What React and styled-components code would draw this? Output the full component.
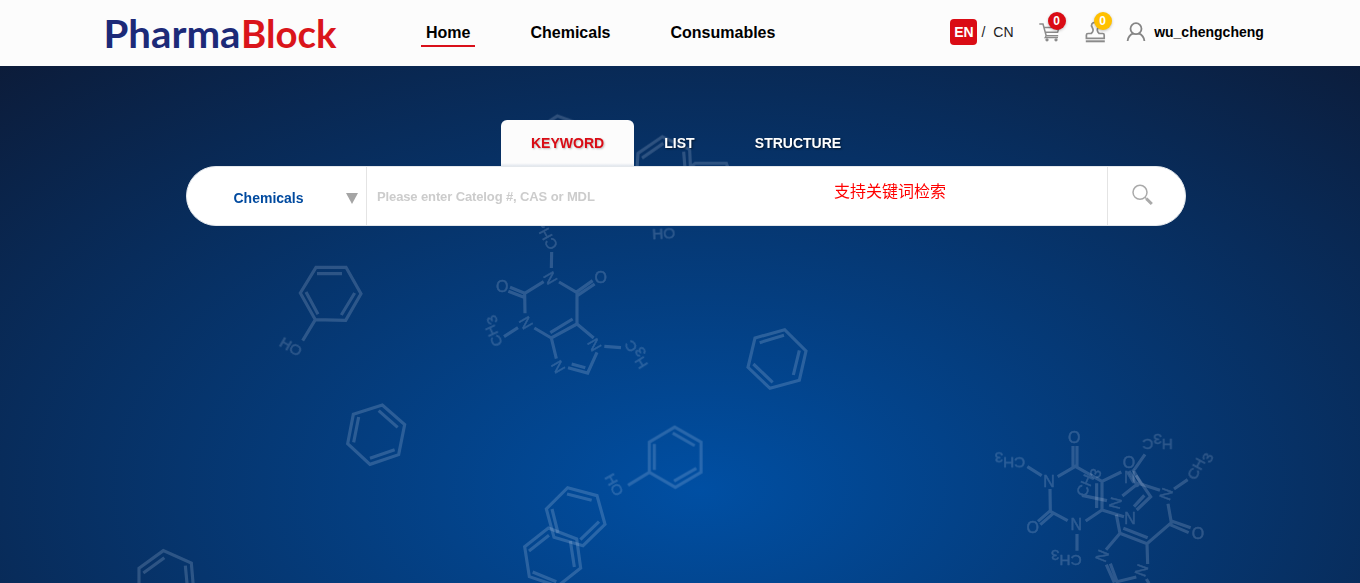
import React from 'react';
import styled, { createGlobalStyle } from 'styled-components';

const GlobalStyle = createGlobalStyle`
  * { box-sizing: border-box; }
  body { margin: 0; overflow: hidden; font-family: "Liberation Sans", "Noto Sans CJK SC", sans-serif; }
`;

const Page = styled.div`
  display: flex;
  flex-direction: column;
  height: 583px;
  width: 1360px;
`;

const Header = styled.header`
  display: flex;
  flex: none;
  height: 66px;
  padding-left: 106px;
  background: #fcfcfc;
`;

const Logo = styled.svg`
  flex: none;
  display: block;
  width: 231px;
  height: 66px;
  overflow: visible;
`;

const Nav = styled.nav`
  display: flex;
  gap: 50px;
  margin-left: 84px;
  padding-top: 19px;
`;

const NavLink = styled.a`
  height: 28px;
  padding: 0 5px;
  font-size: 16px;
  font-weight: 700;
  line-height: 27px;
  color: #000;
  border-bottom: 2px solid ${(p) => (p.$active ? '#d9101a' : 'transparent')};
`;

const Tools = styled.div`
  display: flex;
  align-items: flex-start;
  margin-left: 170px;
  padding-top: 19px;
`;

const Lang = styled.span`
  width: 27px;
  height: 26px;
  border-radius: 4px;
  background: #da0c15;
  color: #fff;
  font-size: 14px;
  font-weight: 700;
  line-height: 27px;
  text-align: center;
`;

const LangText = styled.span`
  margin-left: ${(p) => p.$gap}px;
  color: #222;
  font-size: 14px;
  line-height: 26px;
`;

const IconButton = styled.span`
  position: relative;
  width: 22px;
  height: 26px;
  margin-left: ${(p) => p.$gap}px;
  svg { display: block; width: 22px; height: 26px; }
`;

const Badge = styled.span`
  position: absolute;
  left: 9px;
  top: -7px;
  width: 18px;
  height: 18px;
  border-radius: 50%;
  background: ${(p) => p.$color};
  box-shadow: 0 1px 3px rgba(0, 0, 0, 0.25);
  color: #fff;
  font-size: 12px;
  font-weight: 700;
  line-height: 18px;
  text-align: center;
`;

const User = styled.span`
  margin-left: 6.6px;
  font-size: 14px;
  font-weight: 700;
  line-height: 26px;
  color: #000;
`;

const Hero = styled.main`
  position: relative;
  flex: 1;
  padding: 54px 174px 0 186px;
  background: radial-gradient(1040px 592px at 700px 424px, #004fa3 0%, #0c1b38 100%);
`;

const Molecules = styled.svg`
  position: absolute;
  left: 0;
  top: 0;
  width: 1360px;
  height: 517px;
`;

const Search = styled.div`
  position: relative;
`;

const Tabs = styled.div`
  display: flex;
  height: 46px;
  padding-left: 315px;
`;

const Tab = styled.span`
  padding: 0 30.2px 0 30px;
  border-radius: 6px 6px 0 0;
  font-size: 14px;
  font-weight: 700;
  line-height: 46px;
  color: ${(p) => (p.$active ? '#da0c15' : '#fff')};
  background: ${(p) => (p.$active ? 'linear-gradient(#fcfcfc 43px, #e2e7ee 46px)' : 'none')};
  text-shadow: ${(p) => (p.$active ? '1px 1px 2px rgba(0, 0, 0, .25)' : '1px 1px 2px rgba(0, 0, 0, .6)')};
`;

const Bar = styled.div`
  display: flex;
  height: 60px;
  border: 1px solid #e4e8ec;
  border-radius: 30px;
  background: #fff;
`;

const Category = styled.div`
  display: flex;
  align-items: center;
  width: 180px;
  padding: 4px 8px 0 46.5px;
  border-right: 1px solid #e4e4e4;
  color: #004a9f;
  font-size: 14px;
  font-weight: 700;
  justify-content: space-between;
`;

const Field = styled.div`
  display: flex;
  flex: 1;
  padding-left: 10px;
`;

const Placeholder = styled.span`
  width: 457px;
  color: #ccc;
  font-size: 13px;
  font-weight: 700;
  letter-spacing: -0.12px;
  line-height: 59px;
`;

const Hint = styled.span`
  color: #f00;
  font-family: "Noto Sans CJK SC", sans-serif;
  font-size: 16px;
  line-height: 47px;
`;

const Submit = styled.div`
  display: flex;
  width: 78px;
  padding: 16px 0 0 22.5px;
  border-left: 1px solid #e4e4e4;
`;

const categories = ['Home', 'Chemicals', 'Consumables'];
const modes = ['KEYWORD', 'LIST', 'STRUCTURE'];

/* Each drawing uses a grid of thirds of a pixel; labels are [text, x, y, angle]. */
const molecules = [
  {
    x: 470, y: 220,
    d: 'M245 96L244 144M221 185L164 220L165 280M164 220L120 202M162 232L115 214M267 186L321 218L321 312L244 354L193 324M318 217L368 182M323 226L374 192M308 297L241 338M144 323L102 350M321 312L371 354M244 354L259 416M294 443L353 459L381 397M305 432L346 443M403 379L453 383',
    labels: [['CH₃', 228, 46, -119], ['N', 242, 174, 60], ['O', 97, 200, 0], ['O', 392, 173, 0], ['N', 168, 308, 60], ['N', 374, 374, 60], ['N', 265, 440, 60], ['CH₃', 64, 337, -115], ['H₃C', 496, 405, -122]],
  },
  {
    x: 980, y: 420,
    d: 'M142 140L185 167M233 170L286 139L366 184L366 270L317 303M279 78V140M291 78V140M350 190V264M210 207L211 274L263 302M211 272L174 304M219 281L181 314M291 342V392M366 184L424 156M366 270L432 290M470 270L512 230L468 166M462 260L493 226M463 149L495 103',
    labels: [['CH₃', 90, 130, 180], ['O', 283, 52, 0], ['N', 207, 183, 0], ['O', 158, 323, 0], ['N', 289, 314, 0], ['CH₃', 259, 423, 180], ['N', 449, 171, 0], ['N', 450, 296, 0], ['H₃C', 533, 75, 180]],
  },
  {
    x: 980, y: 420,
    d: 'M306 226L381 242M427 228L475 190L540 211M458 148L485 195M447 153L474 200M582 207L623 179M564 251L574 308L501 371L420 340L409 284M572 302L632 323M570 314L626 338M503 353L430 325M420 340L378 389M501 371L503 432M391 431L411 485L469 471M379 434L403 488M499 477L507 490',
    labels: [['CH₃', 319, 184, -67], ['N', 407, 250, 104], ['O', 447, 128, 0], ['N', 559, 222, 110], ['CH₃', 652, 134, -62], ['O', 654, 341, 0], ['N', 367, 408, 112], ['N', 485, 451, 110]],
  },
  { x: 260, y: 250, d: 'M168 52H258L303 131L257 211L166 209L121 129ZM171 71H246M138 126L174 193M284 129L244 195M166 209L128 272', labels: [['HO', 94, 288, 30]] },
  { x: 260, y: 250, d: 'M280 493L367 465L434 524L416 614L330 643L263 581ZM296 501L281 577M356 482L413 532M330 625L404 599', labels: [] },
  { x: 500, y: 410, d: 'M524 51L603 96V187L526 232L448 187V96ZM463 102V180M518 69L584 107M522 213L589 175M448 187L384 226', labels: [['HO', 345, 223, 61]] },
  { x: 500, y: 410, d: 'M203 233L291 257L315 343L249 407L162 382L139 297ZM201 252L275 271M156 297L174 369M241 389L297 335', labels: [] },
  { x: 500, y: 410, d: 'M145 354L230 387L242 474L173 529L88 500L74 410ZM87 423L147 376M211 393L223 471M98 486L169 515', labels: [] },
  { x: 730, y: 310, d: 'M75 84L164 59L228 123L208 211L120 235L54 172ZM89 98L162 76M208 121L190 195M70 162L128 217', labels: [] },
  { x: 120, y: 530, d: 'M57 170V115L130 62L214 99L220 170M70 129L133 83M196 107L202 170', labels: [] },
  { x: 480, y: 100, d: 'M470 220L474 160L547 110L629 148L632 220M486 174L550 130M611 155L615 205M632 200L646 190H739L750 220M205 65L232 48L280 65', labels: [['HO', 551, 398, -3]] },
];

function Molecule({ x, y, d, labels }) {
  return (
    <g transform={`translate(${x} ${y}) scale(.33333)`} opacity=".18">
      <path d={d} fill="none" stroke="#e6eeff" strokeWidth="9.5" />
      {labels.map(([text, lx, ly, angle], i) => (
        <text key={i} transform={`translate(${lx} ${ly}) rotate(${angle})`} y="17" textAnchor="middle" fontSize={text.length === 1 ? 48 : 46} fill="#e6eeff" stroke="#e6eeff" strokeWidth="1.2">
          {text.split('').map((c, n) => (c === '₃' ? <tspan key={n} dy="15">3</tspan> : <tspan key={n} dy={text[n - 1] === '₃' ? -15 : 0}>{c}</tspan>))}
        </text>
      ))}
    </g>
  );
}

export default function App() {
  return (
    <Page>
      <GlobalStyle />
      <Header>
        <Logo viewBox="0 0 231 66" fontFamily="Lato" fontWeight="700" fontSize="39">
          <text x="-2.5" y="47.5" textLength="137" lengthAdjust="spacingAndGlyphs" fill="#1c2a78">Pharma</text>
          <text x="135" y="47.5" textLength="95.5" lengthAdjust="spacingAndGlyphs" fill="#da151b">Block</text>
        </Logo>
        <Nav>
          {categories.map((c, i) => <NavLink key={c} $active={i === 0}>{c}</NavLink>)}
        </Nav>
        <Tools>
          <Lang>EN</Lang>
          <LangText $gap={4}>/</LangText>
          <LangText $gap={8}>CN</LangText>
          <IconButton $gap={25}>
            <svg viewBox="0 0 22 26" fill="none" stroke="#8b8b8b" strokeWidth="1.5">
              <path d="M.3 5H4L7.2 16.8H19.2" />
              <path d="M5 8.5H20L18.6 13.3H6.4" />
              <path d="M7.2 16.8L6 18.6H19" strokeWidth="1.1" />
              <circle cx="8" cy="20.8" r=".9" /><circle cx="17" cy="20.8" r=".9" />
            </svg>
            <Badge $color="#da0c15">0</Badge>
          </IconButton>
          <IconButton $gap={24}>
            <svg viewBox="0 0 22 26" fill="none" stroke="#8b8b8b" strokeWidth="1.7">
              <path d="M6.2 14.5C8.4 12.6 8.6 10.7 7.4 8.7C5.2 5.3 7.5 3.3 10.2 3.3S15.2 5.3 13 8.7C11.8 10.7 12 12.6 14.2 14.5H17.6Q19.2 14.5 19.2 16V19.3H1.4V16Q1.4 14.5 3 14.5Z" />
              <path d="M.8 22.3H19.8" strokeWidth="2" />
            </svg>
            <Badge $color="#ffc000">0</Badge>
          </IconButton>
          <IconButton $gap={19}>
            <svg viewBox="0 0 22 26" fill="none" stroke="#858585" strokeWidth="1.8">
              <circle cx="10" cy="9.7" r="5.5" />
              <path d="M1.6 22C2 17.8 4 15.6 7.4 14.3M12.6 14.3C16 15.6 18 17.8 18.4 22" />
            </svg>
          </IconButton>
          <User>wu_chengcheng</User>
        </Tools>
      </Header>
      <Hero>
        <Molecules viewBox="0 66 1360 517">
          {molecules.map((m, i) => <Molecule key={i} {...m} />)}
        </Molecules>
        <Search>
          <Tabs>
            {modes.map((m, i) => <Tab key={m} $active={i === 0}>{m}</Tab>)}
          </Tabs>
          <Bar>
            <Category>
              Chemicals
              <svg width="12" height="11" viewBox="0 0 12 11"><path d="M0 0H12L6 11Z" fill="#a5a5a5" /></svg>
            </Category>
            <Field>
              <Placeholder>Please enter Catelog #, CAS or MDL</Placeholder>
              <Hint>支持关键词检索</Hint>
            </Field>
            <Submit>
              <svg width="24" height="24" viewBox="0 0 24 24" fill="none" stroke="#aaa">
                <circle cx="9" cy="9.3" r="7" strokeWidth="1.5" />
                <path d="M14 14.3L15.5 15.8" strokeWidth="1.3" />
                <path d="M15.3 15.6L20.8 21" strokeWidth="3" />
              </svg>
            </Submit>
          </Bar>
        </Search>
      </Hero>
    </Page>
  );
}
